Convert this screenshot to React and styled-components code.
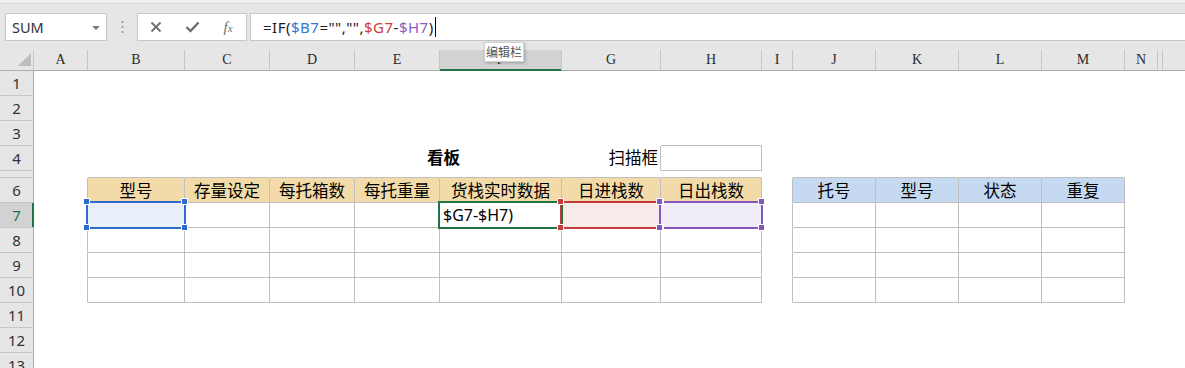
import React from 'react';
import styled, { createGlobalStyle } from 'styled-components';

const GlobalStyle = createGlobalStyle`
  html, body { margin: 0; padding: 0; background: #fff; overflow: hidden; }
  body { font-family: "Noto Sans", "Noto Sans CJK SC", sans-serif; }
  *, *::before, *::after { box-sizing: border-box; }
`;

const COL_LETTERS = ['A', 'B', 'C', 'D', 'E', 'F', 'G', 'H', 'I', 'J', 'K', 'L', 'M', 'N', '', ''];
const COL_WIDTHS = [54, 97, 85, 85, 85, 122, 99, 101, 31, 83, 83, 83, 83, 33, 5];
const ROW_HEIGHTS = [25, 25, 25, 25, 7, 25, 25, 25, 25, 25, 25, 25, 25];
const ACTIVE_COL = 5;
const ACTIVE_ROW = 7;

const HEADERS = {
  1: '型号', 2: '存量设定', 3: '每托箱数', 4: '每托重量', 5: '货栈实时数据', 6: '日进栈数', 7: '日出栈数',
  9: '托号', 10: '型号', 11: '状态', 12: '重复',
};

const SELECTIONS = {
  1: { color: '#2f6bcb', fill: '#e8eff9', handles: true, z: 1 },
  5: { color: '#217346', fill: 'transparent', handles: false, z: 2 },
  6: { color: '#c53a3a', fill: '#f9eaea', handles: true, z: 1 },
  7: { color: '#8655be', fill: '#f0ecf8', handles: true, z: 1 },
};

const inTable = (r, c) =>
  (r >= 6 && r <= 10 && ((c >= 1 && c <= 7) || (c >= 9 && c <= 12))) || (r === 4 && c === 7);

const headerFill = (r, c) => {
  if (r !== 6) return null;
  if (c >= 1 && c <= 7) return '#f2dba8';
  if (c >= 9 && c <= 12) return '#c5d9f0';
  return null;
};

const Window = styled.div`
  position: relative;
  width: 1185px;
  height: 368px;
  overflow: hidden;
  background: #e6e6e6;
  font-family: "Noto Sans", "Noto Sans CJK SC", sans-serif;
`;

const TopStrip = styled.div`
  height: 4px;
  background: #efefef;
  border-bottom: 1px solid #d5d5d5;
`;

const FormulaBar = styled.div`
  display: flex;
  align-items: center;
  height: 46px;
  padding-left: 5px;
`;

const NameBox = styled.div`
  width: 102px;
  height: 28px;
  flex: none;
  background: #fff;
  border: 1px solid #c6c6c6;
  display: flex;
  align-items: center;
  justify-content: space-between;
  padding: 0 6px;
  font-size: 14.5px;
  color: #333;
`;

const DropArrow = styled.span`
  width: 0;
  height: 0;
  border-left: 4px solid transparent;
  border-right: 4px solid transparent;
  border-top: 4px solid #7a7a7a;
  margin-top: 1px;
`;

const Grip = styled.div`
  width: 30px;
  flex: none;
  display: flex;
  justify-content: center;
`;

const ButtonGroup = styled.div`
  width: 110px;
  height: 28px;
  flex: none;
  background: #fff;
  border: 1px solid #c6c6c6;
  display: grid;
  grid-template-columns: repeat(3, 36px);
`;

const IconBtn = styled.div`
  display: flex;
  align-items: center;
  justify-content: center;
  color: #6e6e6e;
`;

const FxLabel = styled.span`
  font-family: "Liberation Serif", "DejaVu Serif", serif;
  font-style: italic;
  font-size: 15px;
  color: #6e6e6e;
  line-height: 1;
  & > small {
    font-size: 11px;
  }
`;

const FormulaInput = styled.div`
  flex: 1;
  height: 28px;
  margin-left: 3px;
  margin-right: -4px;
  background: #fff;
  border: 1px solid #c6c6c6;
  display: flex;
  align-items: center;
  padding-left: 12px;
  font-size: 15px;
  letter-spacing: 0.5px;
  color: #222;
  white-space: pre;
`;

const Ref = styled.span`
  color: ${(p) => p.$color};
`;

const Caret = styled.span`
  display: inline-block;
  width: 1px;
  height: 20px;
  background: #000;
  margin-left: 1px;
`;

const Sheet = styled.div`
  display: grid;
  grid-template-columns: 34px ${COL_WIDTHS.map((w) => `${w}px`).join(' ')} 1fr;
  grid-template-rows: 21px ${ROW_HEIGHTS.map((h) => `${h}px`).join(' ')};
  background: #fff;
`;

const Corner = styled.div`
  background: #e6e6e6;
  border-right: 1px solid #c6c6c6;
  border-bottom: 1px solid #ababab;
  display: flex;
  align-items: flex-end;
  justify-content: flex-end;
  padding: 0 2px 4px 0;
`;

const ColHead = styled.div`
  background: ${(p) => (p.$active ? '#d2d2d2' : '#e6e6e6')};
  border-right: ${(p) => (p.$last ? 'none' : '1px solid #c6c6c6')};
  border-bottom: 1px solid ${(p) => (p.$active ? '#217346' : '#ababab')};
  box-shadow: ${(p) => (p.$active ? 'inset 0 -1px 0 #217346' : 'none')};
  display: flex;
  align-items: center;
  justify-content: center;
  font-family: "Liberation Serif", "DejaVu Serif", serif;
  font-size: 14px;
  color: ${(p) => (p.$active ? '#1d5d39' : '#2a2a2a')};
`;

const RowHead = styled.div`
  background: ${(p) => (p.$active ? '#d2d2d2' : '#e6e6e6')};
  border-right: 1px solid ${(p) => (p.$active ? '#217346' : '#ababab')};
  border-bottom: 1px solid #c6c6c6;
  box-shadow: ${(p) => (p.$active ? 'inset -1px 0 0 #217346' : 'none')};
  display: flex;
  align-items: center;
  justify-content: center;
  font-size: 15px;
  color: ${(p) => (p.$active ? '#217346' : '#333')};
  overflow: hidden;
`;

const Cell = styled.div`
  position: relative;
  grid-column: span ${(p) => p.$span || 1};
  background: ${(p) => p.$fill || '#fff'};
  border-right: 1px solid ${(p) => (p.$r ? '#bfbfbf' : 'transparent')};
  border-bottom: 1px solid ${(p) => (p.$b ? '#bfbfbf' : 'transparent')};
  display: flex;
  align-items: center;
  justify-content: ${(p) => p.$justify || 'center'};
  padding: ${(p) => p.$pad || '0'};
  font-family: "Noto Sans", "Noto Sans CJK SC", sans-serif;
  font-size: 16.5px;
  font-weight: ${(p) => (p.$bold ? 700 : 400)};
  color: #000;
  white-space: nowrap;
`;

const Value = styled.span`
  position: relative;
  z-index: 3;
  font-size: 16px;
  color: #000;
`;

const Selection = styled.div`
  position: absolute;
  left: -2px;
  top: -2px;
  right: -2px;
  bottom: -2px;
  border: 2px solid ${(p) => p.$color};
  background: ${(p) => p.$fill};
  z-index: ${(p) => p.$z};
  pointer-events: none;
`;

const Handle = styled.span`
  position: absolute;
  width: 7px;
  height: 7px;
  background: ${(p) => p.$color};
  border: 1px solid #fff;
  z-index: 4;
  ${(p) => (p.$x === 'l' ? 'left: -5px;' : 'right: -4px;')}
  ${(p) => (p.$y === 't' ? 'top: -5px;' : 'bottom: -4px;')}
`;

const Tooltip = styled.div`
  position: absolute;
  left: 484px;
  top: 42px;
  width: 40px;
  height: 20px;
  background: #fff;
  border: 1px solid #d0d0d0;
  box-shadow: 1px 1px 3px rgba(0, 0, 0, 0.25);
  display: flex;
  align-items: center;
  justify-content: center;
  font-size: 12px;
  color: #555;
  z-index: 10;
`;

function CloseIcon() {
  return (
    <svg width="12" height="12" viewBox="0 0 12 12">
      <path d="M1.5 1.5 L10.5 10.5 M10.5 1.5 L1.5 10.5" stroke="#6e6e6e" strokeWidth="1.8" fill="none" />
    </svg>
  );
}

function CheckIcon() {
  return (
    <svg width="15" height="12" viewBox="0 0 15 12">
      <path d="M1.5 6 L5.5 10 L13.5 1.5" stroke="#6e6e6e" strokeWidth="2.4" fill="none" />
    </svg>
  );
}

function GripDots() {
  return (
    <svg width="3" height="12" viewBox="0 0 3 12">
      <rect x="0.5" y="0" width="2" height="2" fill="#a3a3a3" />
      <rect x="0.5" y="5" width="2" height="2" fill="#a3a3a3" />
      <rect x="0.5" y="10" width="2" height="2" fill="#a3a3a3" />
    </svg>
  );
}

function CornerTriangle() {
  return (
    <svg width="13" height="13" viewBox="0 0 13 13">
      <polygon points="13,0 13,13 0,13" fill="#bdbdbd" />
    </svg>
  );
}

function renderCell(r, c) {
  const key = `${r}-${c}`;
  const right = inTable(r, c) || inTable(r, c + 1);
  const bottom = inTable(r, c) || inTable(r + 1, c);
  const common = { key, $r: right, $b: bottom };

  if (r === 4 && c === 5) return null;
  if (r === 4 && c === 4) {
    return (
      <Cell {...common} $span={2} $bold $justify="flex-start" $pad="0 0 2px 72px">
        看板
      </Cell>
    );
  }
  if (r === 4 && c === 6) {
    return (
      <Cell {...common} $justify="flex-end" $pad="0 2px 2px 0">
        扫描框
      </Cell>
    );
  }
  if (r === 6 && HEADERS[c]) {
    return (
      <Cell {...common} $fill={headerFill(r, c)}>
        {HEADERS[c]}
      </Cell>
    );
  }
  if (r === ACTIVE_ROW && SELECTIONS[c]) {
    const s = SELECTIONS[c];
    return (
      <Cell {...common} $justify="flex-start" $pad="0 0 0 3px">
        <Selection $color={s.color} $fill={s.fill} $z={s.z} />
        {s.handles &&
          [['l', 't'], ['r', 't'], ['l', 'b'], ['r', 'b']].map(([x, y]) => (
            <Handle key={x + y} $x={x} $y={y} $color={s.color} />
          ))}
        {c === ACTIVE_COL && <Value>$G7-$H7)</Value>}
      </Cell>
    );
  }
  return <Cell {...common} />;
}

export default function App() {
  const rows = ROW_HEIGHTS.map((_, i) => i + 1);
  return (
    <>
      <GlobalStyle />
      <Window>
        <TopStrip />
        <FormulaBar>
          <NameBox>
            SUM
            <DropArrow />
          </NameBox>
          <Grip>
            <GripDots />
          </Grip>
          <ButtonGroup>
            <IconBtn>
              <CloseIcon />
            </IconBtn>
            <IconBtn>
              <CheckIcon />
            </IconBtn>
            <IconBtn>
              <FxLabel>
                f<small>x</small>
              </FxLabel>
            </IconBtn>
          </ButtonGroup>
          <FormulaInput>
            =IF(<Ref $color="#3a74d2">$B7</Ref>="","",<Ref $color="#d13c3c">$G7</Ref>-<Ref $color="#8a5cc4">$H7</Ref>)
            <Caret />
          </FormulaInput>
        </FormulaBar>
        <Sheet>
          <Corner>
            <CornerTriangle />
          </Corner>
          {COL_LETTERS.map((l, c) => (
            <ColHead key={`h${c}`} $active={c === ACTIVE_COL} $last={c === COL_LETTERS.length - 1}>
              {l}
            </ColHead>
          ))}
          {rows.map((r) => (
            <React.Fragment key={`r${r}`}>
              <RowHead $active={r === ACTIVE_ROW}>{r === 5 ? '' : r}</RowHead>
              {COL_LETTERS.map((_, c) => renderCell(r, c))}
            </React.Fragment>
          ))}
        </Sheet>
        <Tooltip>编辑栏</Tooltip>
      </Window>
    </>
  );
}
